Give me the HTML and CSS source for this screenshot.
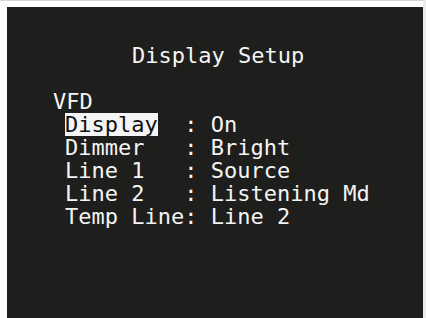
FILE: index.html
```html
<!DOCTYPE html>
<html>
<head>
<meta charset="utf-8">
<link rel="stylesheet" href="styles.css">
</head>
<body>
<div class="screen">
  <div class="title">Display Setup</div>
  <div class="menu">
    <div class="group">VFD</div>
    <div class="items">
      <div class="row"><span class="label sel">Display</span><span class="sep">  : </span><span class="value">On</span></div>
      <div class="row"><span class="label">Dimmer   : </span><span class="value">Bright</span></div>
      <div class="row"><span class="label">Line 1   : </span><span class="value">Source</span></div>
      <div class="row"><span class="label">Line 2   : </span><span class="value">Listening Md</span></div>
      <div class="row"><span class="label">Temp Line: </span><span class="value">Line 2</span></div>
    </div>
  </div>
</div>
</body>
</html>
```

FILE: styles.css
```css
html, body {
  margin: 0;
  padding: 0;
  background: #ffffff;
}
body {
  border-top: 1px solid #d6d6d6;
  border-right: 3px solid #ececec;
  height: 317px;
  overflow: hidden;
}
.screen {
  margin: 6px 0 0 7px;
  height: 311px;
  background: #1e1e1c;
  color: #f4f4f4;
  font-family: "DejaVu Sans Mono", monospace;
  font-size: 22px;
  line-height: 23px;
  padding-top: 37px;
  box-sizing: border-box;
}
.title, .group, .row {
  white-space: pre;
  height: 23px;
}
.title {
  padding-left: 125px;
  margin-bottom: 23px;
}
.menu {
  padding-left: 46px;
}
.items {
  padding-left: 12px;
}
.sel {
  display: inline-block;
  height: 23px;
  background: #f4f4f4;
  color: #111111;
}
```
